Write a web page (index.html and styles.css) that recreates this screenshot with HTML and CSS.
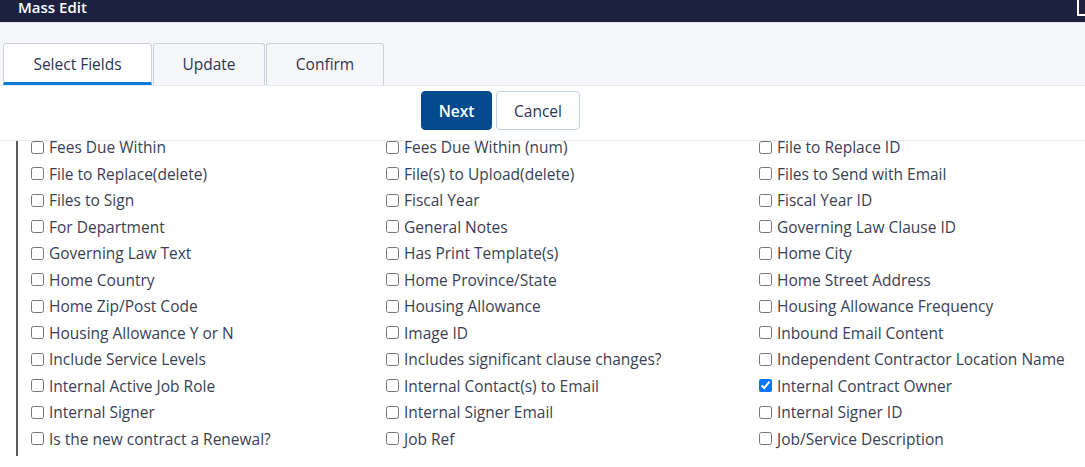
FILE: index.html
```html
<!DOCTYPE html>
<html lang="en">
<head>
    <meta charset="UTF-8">
    <title>Mass Edit</title>
    <link rel="stylesheet" href="styles.css">
</head>
<body>
    <div class="titlebar">
        <span class="title">Mass Edit</span>
        <span class="close-box"></span>
    </div>
    <div class="tab-strip">
        <div class="tab active">Select Fields</div>
        <div class="tab">Update</div>
        <div class="tab">Confirm</div>
    </div>
    <div class="actions">
        <button class="btn btn-primary">Next</button>
        <button class="btn btn-default">Cancel</button>
    </div>
    <div class="field-list">
        <div class="field-grid">
            <label><input type="checkbox"> Fees Due Within</label>
            <label><input type="checkbox"> Fees Due Within (num)</label>
            <label><input type="checkbox"> File to Replace ID</label>
            <label><input type="checkbox"> File to Replace(delete)</label>
            <label><input type="checkbox"> File(s) to Upload(delete)</label>
            <label><input type="checkbox"> Files to Send with Email</label>
            <label><input type="checkbox"> Files to Sign</label>
            <label><input type="checkbox"> Fiscal Year</label>
            <label><input type="checkbox"> Fiscal Year ID</label>
            <label><input type="checkbox"> For Department</label>
            <label><input type="checkbox"> General Notes</label>
            <label><input type="checkbox"> Governing Law Clause ID</label>
            <label><input type="checkbox"> Governing Law Text</label>
            <label><input type="checkbox"> Has Print Template(s)</label>
            <label><input type="checkbox"> Home City</label>
            <label><input type="checkbox"> Home Country</label>
            <label><input type="checkbox"> Home Province/State</label>
            <label><input type="checkbox"> Home Street Address</label>
            <label><input type="checkbox"> Home Zip/Post Code</label>
            <label><input type="checkbox"> Housing Allowance</label>
            <label><input type="checkbox"> Housing Allowance Frequency</label>
            <label><input type="checkbox"> Housing Allowance Y or N</label>
            <label><input type="checkbox"> Image ID</label>
            <label><input type="checkbox"> Inbound Email Content</label>
            <label><input type="checkbox"> Include Service Levels</label>
            <label><input type="checkbox"> Includes significant clause changes?</label>
            <label><input type="checkbox"> Independent Contractor Location Name</label>
            <label><input type="checkbox"> Internal Active Job Role</label>
            <label><input type="checkbox"> Internal Contact(s) to Email</label>
            <label><input type="checkbox" checked> Internal Contract Owner</label>
            <label><input type="checkbox"> Internal Signer</label>
            <label><input type="checkbox"> Internal Signer Email</label>
            <label><input type="checkbox"> Internal Signer ID</label>
            <label><input type="checkbox"> Is the new contract a Renewal?</label>
            <label><input type="checkbox"> Job Ref</label>
            <label><input type="checkbox"> Job/Service Description</label>
        </div>
    </div>
</body>
</html>
```

FILE: styles.css
```css
body {
    margin: 0;
    font-family: 'Open Sans', 'Noto Sans', sans-serif;
    background-color: #ffffff;
    color: #3a3f55;
    overflow: hidden;
}
.titlebar {
    height: 22px;
    background-color: #1c2140;
    border-bottom: 1px solid #e3e6ec;
    position: relative;
}
.title {
    display: block;
    padding-left: 18px;
    color: #ffffff;
    font-size: 15px;
    font-weight: 600;
    line-height: 14px;
}
.close-box {
    position: absolute;
    right: -8px;
    top: -2px;
    width: 12px;
    height: 14px;
    border: 2px solid #ffffff;
}
.tab-strip {
    display: flex;
    height: 42px;
    padding: 20px 0 0 3px;
    background-color: #f6f7f9;
    border-bottom: 1px solid #e8eaee;
}
.tab {
    box-sizing: border-box;
    height: 42px;
    border: 1px solid #cdd0da;
    border-bottom: none;
    border-radius: 3px 3px 0 0;
    background-color: #f6f7f9;
    font-size: 15.5px;
    line-height: 40px;
    text-align: center;
    color: #2e3450;
    margin-right: 1px;
}
.tab:nth-child(1) { width: 149px; }
.tab:nth-child(2) { width: 112px; }
.tab:nth-child(3) { width: 118px; }
.tab.active {
    background-color: #ffffff;
    border-bottom: 3px solid #0a7bd8;
}
.actions {
    height: 49px;
    padding: 5px 0 0 421px;
    display: flex;
    align-items: flex-start;
    gap: 4px;
    border-bottom: 1px solid #e8eaee;
}
.btn {
    height: 39px;
    border-radius: 4px;
    font-family: 'Open Sans', 'Noto Sans', sans-serif;
    font-size: 15.5px;
    cursor: pointer;
}
.btn-primary {
    width: 71px;
    background-color: #034b8c;
    border: 1px solid #034b8c;
    color: #ffffff;
    font-weight: 600;
}
.btn-default {
    width: 84px;
    background-color: #ffffff;
    border: 1px solid #c3d0df;
    color: #2e3450;
}
.field-list {
    margin-left: 16px;
    height: 315px;
    border-left: 2px solid #5a5a5a;
    overflow: hidden;
}
.field-grid {
    margin-top: -7px;
    padding-left: 10px;
    display: grid;
    grid-template-columns: 355px 373px 1fr;
    grid-auto-rows: 26.5px;
    font-size: 15.5px;
}
.field-grid label {
    display: flex;
    align-items: center;
    white-space: nowrap;
}
.field-grid input {
    margin: 0 5px 0 3px;
    width: 13px;
    height: 13px;
}
```
